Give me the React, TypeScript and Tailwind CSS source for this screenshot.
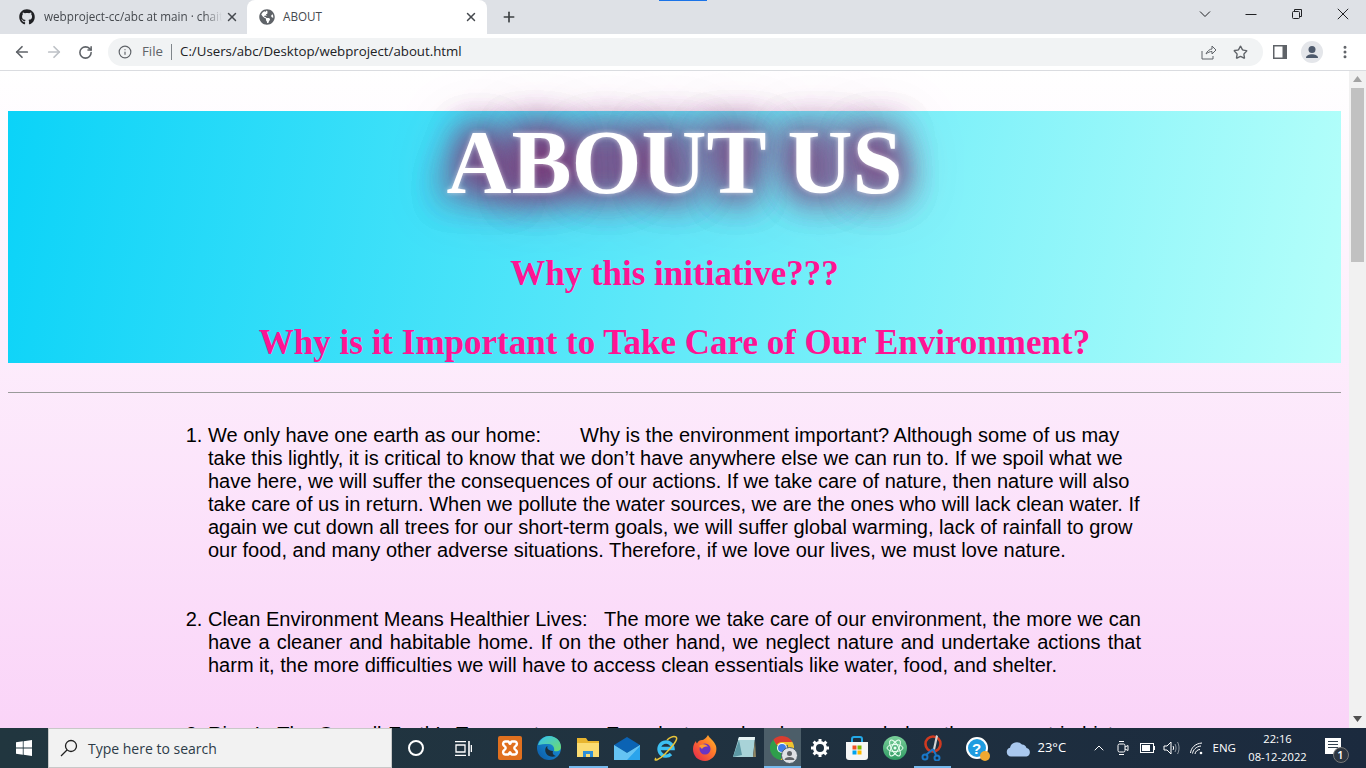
import React from "react";
import { FaGithub, FaGlobeAmericas } from "react-icons/fa";
import { ArrowLeft, ArrowRight, RotateCw, Info, Star, X, Plus, EllipsisVertical, ChevronUp } from "lucide-react";

const ui = "font-['Open_Sans','Noto_Sans',sans-serif]";

function Slot({ children, active, line, narrow }: { children: React.ReactNode; active?: boolean; line?: boolean; narrow?: boolean }) {
  return (
    <div className={`relative flex h-10 shrink-0 items-center justify-center ${narrow ? "w-[37.5px]" : "w-[39px]"} ${active ? "bg-[#4c5e69]" : ""}`}>
      {children}
      {line && <div className="absolute inset-x-0 bottom-0 h-[2px] bg-[#76b9ed]" />}
    </div>
  );
}

const Xampp = () => (
  <svg width="24" height="24" viewBox="0 0 24 24">
    <rect width="24" height="24" rx="2" fill="#e0701f" />
    <path d="M7 5.500h3.200c1 0 1.200 2.400 1.800 2.400s.8-2.400 1.800-2.400H17c2 0 2.600 3 .9 4.300-1 .8-1.600 1.100-1.600 2.200s.6 1.400 1.600 2.200c1.700 1.300 1.100 4.300-.9 4.300h-3.200c-1 0-1.200-2.400-1.800-2.400s-.8 2.400-1.800 2.400H7c-2 0-2.600-3-.9-4.300 1-.8 1.600-1.100 1.600-2.200s-.6-1.400-1.600-2.200C4.400 8.500 5 5.500 7 5.500z" fill="none" stroke="#fff" strokeWidth="2.400" />
  </svg>
);

const Edge = () => (
  <svg width="24" height="24" viewBox="0 0 24 24">
    <defs>
      <linearGradient id="eg1" x1="0" y1="1" x2="1" y2="0"><stop offset="0" stopColor="#0c59a4" /><stop offset="1" stopColor="#1b9de2" /></linearGradient>
      <linearGradient id="eg2" x1="0" y1="0" x2="1" y2="1"><stop offset="0" stopColor="#35c1f1" /><stop offset="1" stopColor="#6fdc6a" /></linearGradient>
    </defs>
    <circle cx="12" cy="12" r="12" fill="url(#eg1)" />
    <path d="M1 9C3 3 8 0 12 0c7 0 12 5 12 11 0 4-4 5-7 4 1-3-1-7-5-7-5 0-9 .5-11 1z" fill="url(#eg2)" />
    <path d="M16 15c-1.500 0-7-1-5.500-5-2.500 1-3 5-1 8 2 2.500 6 3.500 9.500 2-2.500-.5-4-2.500-3-5z" fill="#1c2f3c" />
  </svg>
);

const Folder = () => (
  <svg width="24" height="22" viewBox="0 0 24 22">
    <path d="M1 1h9l2 3h11v16H1z" fill="#e8b52f" />
    <path d="M1 6h22v14H1z" fill="#fbdc72" />
    <path d="M7 20v-6h10v6h-3v-3h-4v3z" fill="#2f8fd6" />
  </svg>
);

const Mail = () => (
  <svg width="26" height="23" viewBox="0 0 26 23">
    <path d="M0 8 13 0l13 8-13 8z" fill="#0b63b4" />
    <path d="M0 8l13 8 13-8v15H0z" fill="#2aa4ec" />
    <path d="M0 8l13 8 13-8v1L13 23H0z" fill="#7fd0f7" opacity=".7" />
  </svg>
);

const IE = () => (
  <svg width="26" height="26" viewBox="0 0 26 26">
    <path d="M6.500 13.500H20a7 7 0 1 0-2 5.500" fill="none" stroke="#3cc0f2" strokeWidth="3.400" />
    <path d="M3 23C0 27 6 25 12 19S26 4 23 2c-2-1-6 .5-9 3" fill="none" stroke="#e9c53a" strokeWidth="1.500" />
  </svg>
);

const Firefox = () => (
  <svg width="24" height="26" viewBox="0 0 24 26">
    <defs>
      <linearGradient id="ff" x1="0" y1="1" x2="1" y2="0"><stop offset="0" stopColor="#e3214f" /><stop offset=".6" stopColor="#ff7a2a" /><stop offset="1" stopColor="#ffc22e" /></linearGradient>
    </defs>
    <path d="M15 0c1 3 6 5 8 11 2 8-4 15-11 15C5 26 0 21 0 14c0-3 1-6 3-8 0 1 .5 2 1 2.500C5 6 7 5 9 5c0 0 3 0 6-5z" fill="url(#ff)" />
    <circle cx="12" cy="14" r="5.500" fill="#6a35c4" />
    <path d="M6 11c3-3 8-2 9 1-2-1-5 0-6 2-1-1-2-2-3-3z" fill="#ff9a2e" />
  </svg>
);

const Notepad = () => (
  <svg width="24" height="24" viewBox="0 0 24 24">
    <path d="M7 1h16l-2 20H1z" fill="#a8d3d8" />
    <path d="M7 1h16l-.4 3H6z" fill="#e8f4f5" />
    <path d="M1 21 7 4l3 15z" fill="#5c98a4" />
    <path d="M23 4l1 17h-3z" fill="#8f8664" />
  </svg>
);

const Chrome = () => (
  <div className="relative h-6 w-6">
    <svg width="24" height="24" viewBox="0 0 24 24">
      <path d="M12 12 3.340 7A12 12 0 0 1 22.400 6z" fill="#f0c42e" />
      <path d="M12 0a12 12 0 0 1 10.400 6H12a6 6 0 0 0-5.500 3.500L3.300 3.700A12 12 0 0 1 12 0z" fill="#d93d30" />
      <path d="M3.300 3.700 12 18l-1.500 5.900A12 12 0 0 1 3.300 3.700z" fill="#2f9e4b" />
      <path d="M22.400 6A12 12 0 0 1 10.500 23.900L16 14a5 5 0 0 0 0-8z" fill="#f0c42e" />
      <circle cx="12" cy="12" r="5" fill="#fff" />
      <circle cx="12" cy="12" r="4" fill="#3f7de8" />
    </svg>
    <svg className="absolute -bottom-[4px] -right-[4px]" width="17" height="17" viewBox="0 0 17 17">
      <circle cx="8.500" cy="8.500" r="8" fill="#dfe1e5" stroke="#4c5e69" />
      <circle cx="8.500" cy="6.500" r="2.500" fill="#5f6368" />
      <path d="M3.500 13c0-4 10-4 10 0z" fill="#5f6368" />
    </svg>
  </div>
);

const Gear = () => (
  <svg width="18" height="18" viewBox="0 0 18 18">
    <circle cx="9" cy="9" r="5.500" fill="none" stroke="#fff" strokeWidth="3" />
    <path d="M9 0v3M9 15v3M0 9h3M15 9h3M2.600 2.600l2.100 2.100M13.300 13.300l2.100 2.100M2.600 15.400l2.100-2.100M13.300 4.700l2.100-2.100" stroke="#fff" strokeWidth="3" />
  </svg>
);

const Store = () => (
  <svg width="24" height="24" viewBox="0 0 24 24">
    <path d="M7 7V3c0-1 1-2 2-2h6c1 0 2 1 2 2v4" fill="none" stroke="#23a9e8" strokeWidth="2" />
    <path d="M1 6h22v15a3 3 0 0 1-3 3H4a3 3 0 0 1-3-3z" fill="#f6f6f6" />
    <rect x="7.500" y="9.500" width="4" height="4" fill="#f25022" />
    <rect x="12.500" y="9.500" width="4" height="4" fill="#7fba00" />
    <rect x="7.500" y="14.500" width="4" height="4" fill="#00a4ef" />
    <rect x="12.500" y="14.500" width="4" height="4" fill="#ffb900" />
  </svg>
);

const Atom = () => (
  <svg width="24" height="24" viewBox="0 0 24 24">
    <defs>
      <linearGradient id="at" x1="0" y1="0" x2="0" y2="1"><stop offset="0" stopColor="#7ad09a" /><stop offset="1" stopColor="#2f9a63" /></linearGradient>
    </defs>
    <circle cx="12" cy="12" r="12" fill="url(#at)" />
    <g fill="none" stroke="#eafff2" strokeWidth="1">
      <ellipse cx="12" cy="12" rx="9" ry="3.500" transform="rotate(60 12 12)" />
      <ellipse cx="12" cy="12" rx="9" ry="3.500" transform="rotate(-60 12 12)" />
      <ellipse cx="12" cy="12" rx="8" ry="3.500" />
    </g>
    <circle cx="12" cy="12" r="1.500" fill="#eafff2" />
  </svg>
);

const Snip = () => (
  <svg width="22" height="26" viewBox="0 0 22 26">
    <circle cx="12" cy="9" r="7.500" fill="none" stroke="#d03a20" strokeWidth="2.600" />
    <path d="M15 0l2 1-3 14-2-1z" fill="#d5d5d5" />
    <path d="M12 14 5 20M12 14l3 6" stroke="#1a78c8" strokeWidth="2" />
    <circle cx="4" cy="22" r="2.500" fill="none" stroke="#1a78c8" strokeWidth="2" />
    <circle cx="16" cy="23" r="2.500" fill="none" stroke="#1a78c8" strokeWidth="2" />
  </svg>
);

const Help = () => (
  <div className="relative flex h-[22px] w-[22px] items-center justify-center rounded-full border-2 border-white bg-[#1f9ce0] font-['Liberation_Sans',sans-serif] text-[15px] font-bold leading-none text-white">
    ?
    <div className="absolute -bottom-[4px] -right-[4px] h-[10px] w-[10px] rounded-full bg-[#f0a830]" />
  </div>
);

const Cloud = () => (
  <svg width="25" height="17" viewBox="0 0 25 17">
    <path d="M5 16.500a4.500 4.500 0 0 1-1-8.800A7 7 0 0 1 16 4.500a5 5 0 0 1 4.500 3.600A4.300 4.300 0 0 1 20.500 16.500z" fill="#a9c8ee" />
  </svg>
);

export default function App() {
  return (
    <div className={`flex h-screen w-full flex-col overflow-hidden bg-white ${ui}`}>
      {/* tab strip */}
      <div className="relative flex h-[34px] shrink-0 items-end bg-[#dee1e6] pl-[8px]">
        <div className="absolute left-[659px] top-0 h-[1px] w-[48px] bg-[#1a73e8]" />
        <div className="flex h-[34px] w-[239px] items-center pl-[11px] text-[11.700px] text-[#45494e]">
          <FaGithub className="h-[16px] w-[16px] shrink-0 text-[#202124]" />
          <span className="ml-[9px] w-[178px] whitespace-nowrap [mask-image:linear-gradient(to_right,black_90%,transparent)]">webproject-cc/abc at main · chait</span>
          <X className="ml-[3px] h-[14px] w-[14px] shrink-0 text-[#45494e]" strokeWidth={2.500} />
        </div>
        <div className="flex h-[34px] w-[240px] items-center rounded-t-[8px] bg-white pl-[12px] pr-[9px] text-[11.700px] text-[#45494e]">
          <FaGlobeAmericas className="h-[16px] w-[16px] shrink-0 text-[#5f6368]" />
          <span className="ml-[8px] flex-1">ABOUT</span>
          <X className="h-[14px] w-[14px] shrink-0 text-[#45494e]" strokeWidth={2.500} />
        </div>
        <Plus className="ml-[14px] mb-[9px] h-[16px] w-[16px] text-[#3c4043]" strokeWidth={2.500} />
        <div className="ml-auto mr-[17px] flex h-[34px] items-center gap-[34px] pb-[6px]">
          <svg width="12" height="12" viewBox="0 0 12 12" fill="none" stroke="#202124"><path d="M1 3.500l5 5 5-5" /></svg>
          <svg width="12" height="12" viewBox="0 0 12 12" fill="none" stroke="#202124"><path d="M.5 6.500h11" /></svg>
          <svg width="12" height="12" viewBox="0 0 12 12" fill="none" stroke="#202124">
            <rect x="1.500" y="3.500" width="7" height="7" rx="1" />
            <path d="M3.500 3V1.500h7v7H9" />
          </svg>
          <svg width="12" height="12" viewBox="0 0 12 12" fill="none" stroke="#202124"><path d="M.8.800l10.400 10.400M11.200.800.8 11.200" /></svg>
        </div>
      </div>

      {/* toolbar */}
      <div className="flex h-[37px] shrink-0 items-center border-b border-[#dadce0] bg-white text-[#5f6368]">
        <ArrowLeft className="ml-[13px] h-[18px] w-[18px]" strokeWidth={2.300} />
        <ArrowRight className="ml-[14px] h-[18px] w-[18px] text-[#bdc1c6]" strokeWidth={2.300} />
        <RotateCw className="ml-[15px] h-[15px] w-[15px]" strokeWidth={2.500} />
        <div className="ml-[15px] flex h-[28px] w-[1155px] items-center rounded-full bg-[#f1f3f4]">
          <Info className="ml-[10px] h-[14px] w-[14px]" strokeWidth={2} />
          <span className="ml-[10px] text-[13.300px] text-[#5f6368]">File</span>
          <div className="ml-[8px] h-[16px] w-px bg-[#80868b]" />
          <span className="ml-[8px] text-[13.250px] text-[#202124]">C:/Users/abc/Desktop/webproject/about.html</span>
          <svg className="ml-auto" width="16" height="15" viewBox="0 0 16 15" fill="none" stroke="#5f6368" strokeWidth="1">
            <path d="M1 6v8h11v-3M5 9c1-3 4-5 6-5V1l4 4-4 4V6.500c-2 0-4 .8-6 2.500z" />
          </svg>
          <Star className="ml-[16px] mr-[15px] h-[15px] w-[15px]" strokeWidth={2.200} />
        </div>
        <svg className="ml-[10px]" width="14" height="14" viewBox="0 0 14 14">
          <rect width="14" height="14" fill="#5f6368" />
          <rect x="1.500" y="1.500" width="8" height="11" fill="#fff" />
        </svg>
        <svg className="ml-[14px]" width="22" height="22" viewBox="0 0 22 22">
          <circle cx="11" cy="11" r="11" fill="#e4e6ea" />
          <circle cx="11" cy="8.500" r="3.500" fill="#4e5a6c" />
          <path d="M5 17c0-5 12-5 12 0z" fill="#4e5a6c" />
        </svg>
        <EllipsisVertical className="ml-[14px] h-[16px] w-[16px]" strokeWidth={2.500} />
      </div>

      {/* page */}
      <div className="flex min-h-0 flex-1">
        <div className="min-w-0 flex-1 overflow-hidden bg-[linear-gradient(to_bottom,#ffffff,#fad4f8)] px-[8px] pt-[40px]">
          <div className="flex h-[252px] flex-col items-center bg-[linear-gradient(100deg,#0bd3f8,#b5fffa)] font-['Liberation_Serif',serif] font-bold">
            <h1 className="h-[106px] text-[90px] leading-[103px] text-white [text-shadow:0_0_5px_rgba(255,255,255,0.6),0_0_36px_#7c3070,0_0_36px_#7c3070,0_0_36px_#7c3070,0_0_60px_#a04a90]">ABOUT US</h1>
            <h2 className="mt-[36px] text-[35px] leading-[41px] text-[#ff1493]">Why this initiative???</h2>
            <h2 className="mt-[28px] text-[35px] leading-[41px] text-[#ff1493]">Why is it Important to Take Care of Our Environment?</h2>
          </div>
          <div className="mt-[29px] h-px bg-[#9a9a9a]" />
          <ol className="ml-[200px] mt-[31px] w-[933px] list-decimal font-['Liberation_Sans',sans-serif] text-[20px] leading-[23px] text-black">
            <li className="mb-[46px]">We only have one earth as our home:&nbsp;&nbsp;&nbsp;&nbsp;&nbsp;&nbsp;&nbsp;Why is the environment important? Although some of us may take this lightly, it is critical to know that we don’t have anywhere else we can run to. If we spoil what we have here, we will suffer the consequences of our actions. If we take care of nature, then nature will also take care of us in return. When we pollute the water sources, we are the ones who will lack clean water. If again we cut down all trees for our short-term goals, we will suffer global warming, lack of rainfall to grow our food, and many other adverse situations. Therefore, if we love our lives, we must love nature.</li>
            <li className="mb-[46px] text-justify">Clean Environment Means Healthier Lives:&nbsp;&nbsp; The more we take care of our environment, the more we can have a cleaner and habitable home. If on the other hand, we neglect nature and undertake actions that harm it, the more difficulties we will have to access clean essentials like water, food, and shelter.</li>
            <li className="text-justify">Rise In The Overall Earth’s Temperature:&nbsp;&nbsp;&nbsp;&nbsp; Even last year has been recorded as the warmest in history and the trend is that it gets warmer every year as a result of our actions on the planet.</li>
          </ol>
        </div>
        {/* scrollbar */}
        <div className="flex w-[17px] shrink-0 flex-col items-center bg-[#f1f1f1]">
          <svg className="mt-[5px]" width="9" height="6" viewBox="0 0 9 6"><path d="M4.500 0 9 6H0z" fill="#a3a3a3" /></svg>
          <div className="mt-[6px] h-[174px] w-[13px] bg-[#c1c1c1]" />
          <svg className="mt-auto mb-[6px]" width="9" height="6" viewBox="0 0 9 6"><path d="M0 0h9L4.500 6z" fill="#505050" /></svg>
        </div>
      </div>

      {/* taskbar */}
      <div className="flex h-10 shrink-0 items-center bg-[linear-gradient(to_right,#21363f,#203240_50%,#1b2a3e)] text-white">
        <div className="flex h-10 w-12 shrink-0 items-center justify-center">
          <svg width="16" height="16" viewBox="0 0 16 16" fill="#fff">
            <path d="M0 2.300 6.800 1.300v6.300H0zM7.600 1.200 16 0v7.600H7.600zM0 8.400h6.800v6.300L0 13.700zM7.600 8.400H16V16l-8.400-1.200z" />
          </svg>
        </div>
        <div className="flex h-10 w-[344px] shrink-0 items-center border border-[#c8c8c8] bg-[#f2f2f2] text-[14px] text-[#2d3c48]">
          <svg className="ml-[11px]" width="18" height="18" viewBox="0 0 18 18" fill="none" stroke="#202020" strokeWidth="1.300">
            <circle cx="11" cy="7" r="5.500" />
            <path d="M7 11l-6 6" />
          </svg>
          <span className="ml-[10px]">Type here to search</span>
        </div>
        <div className="flex h-10 w-[48px] shrink-0 items-center justify-center">
          <div className="h-[16px] w-[16px] rounded-full border-2 border-white" />
        </div>
        <div className="flex h-10 w-[47px] shrink-0 items-center justify-center">
          <svg width="17" height="15" viewBox="0 0 17 15" fill="none" stroke="#fff" strokeWidth="1.300">
            <path d="M0 .7h11M0 14.300h11M1 4h9v7H1z" />
            <path d="M14 0v15M16.500 4v7" strokeWidth="1.600" />
          </svg>
        </div>
        <div className="w-[3.500px] shrink-0" />
        <Slot><Xampp /></Slot>
        <Slot><Edge /></Slot>
        <Slot line><Folder /></Slot>
        <Slot><Mail /></Slot>
        <Slot><IE /></Slot>
        <Slot><Firefox /></Slot>
        <Slot><Notepad /></Slot>
        <Slot narrow active line><Chrome /></Slot>
        <Slot narrow><Gear /></Slot>
        <Slot narrow><Store /></Slot>
        <Slot narrow><Atom /></Slot>
        <Slot narrow line><Snip /></Slot>
        <div className="ml-[14.500px] shrink-0"><Help /></div>
        <div className="ml-[18px] shrink-0"><Cloud /></div>
        <span className="ml-[7px] w-[30px] whitespace-nowrap text-[13px]">23°C</span>
        <ChevronUp className="ml-[23px] h-[16px] w-[16px]" strokeWidth={1.500} />
        <svg className="ml-[10px]" width="12" height="16" viewBox="0 0 12 16" fill="none" stroke="#fff" strokeWidth="1">
          <rect x="1" y="4" width="7" height="8" rx="1.500" />
          <path d="M8 7l3-1.500v5L8 9M2 1.500h5M2 14.500h5" />
        </svg>
        <svg className="ml-[11px]" width="15" height="10" viewBox="0 0 15 10">
          <rect x=".5" y=".5" width="13" height="9" fill="none" stroke="#fff" />
          <rect x="2" y="2" width="8" height="6" fill="#fff" />
          <rect x="14" y="3" width="1" height="4" fill="#fff" />
        </svg>
        <svg className="ml-[8px]" width="17" height="14" viewBox="0 0 17 14" fill="none" stroke="#fff" strokeWidth="1">
          <path d="M1 5h3l4-4v12l-4-4H1zM10 5c.8 1.200.8 2.800 0 4" />
          <path d="M12 3c1.400 2.500 1.400 5.500 0 8M14.500 1c2 3.500 2 8.500 0 12" opacity=".5" />
        </svg>
        <svg className="ml-[10px]" width="13" height="13" viewBox="0 0 13 13" fill="none" stroke="#fff" strokeWidth="1">
          <path d="M.5 11C1 6 5 1.500 12 1M2.500 11.500C3 8 6 4.500 11 4M5 12c.3-2.500 2.500-4.500 5-4.500" />
          <circle cx="11" cy="11" r="1.300" fill="#fff" stroke="none" />
        </svg>
        <span className="ml-[10px] w-[24px] whitespace-nowrap text-[11.500px]">ENG</span>
        <div className="ml-[11px] flex w-[60px] flex-col items-center whitespace-nowrap text-[11.200px] leading-[18px]">
          <span>22:16</span>
          <span>08-12-2022</span>
        </div>
        <div className="relative ml-[17px] h-[16px] w-[16px] -translate-y-[2px] bg-white">
          <div className="mx-[3px] mt-[3px] h-px bg-[#33424f]" />
          <div className="mx-[3px] mt-[2px] h-px bg-[#33424f]" />
          <div className="mx-[3px] mt-[2px] h-px bg-[#33424f]" />
          <div className="absolute -bottom-[9px] -right-[8px] flex h-[16px] w-[16px] items-center justify-center rounded-full border border-[#777] bg-[#2c3540] text-[11px] font-semibold">1</div>
        </div>
      </div>
    </div>
  );
}
